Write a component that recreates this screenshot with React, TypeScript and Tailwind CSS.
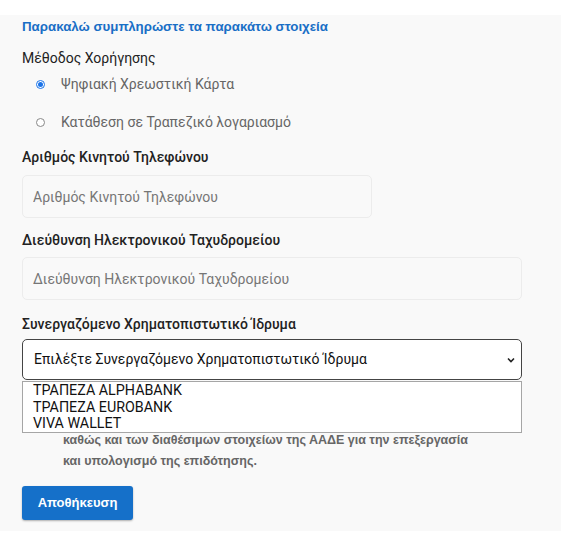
export default function App() {
  return (
    <div className="bg-white pt-[15px] pb-[10px] font-['Roboto',sans-serif]">
      <div className="bg-[#f9f9f9] px-[22px] pt-[3px] pb-[11px]">
        <h3 className="font-['Liberation_Sans',Arial,sans-serif] text-[13.3px] leading-[18px] font-bold text-[#1a6fc6]">
          Παρακαλώ συμπληρώστε τα παρακάτω στοιχεία
        </h3>

        <div className="mt-[13px] text-[14px] leading-[18px] text-[#222]">Μέθοδος Χορήγησης</div>
        <div className="mt-[8px] flex flex-col gap-[20px] pl-[14px]">
          <Radio checked label="Ψηφιακή Χρεωστική Κάρτα" />
          <Radio label="Κατάθεση σε Τραπεζικό λογαριασμό" />
        </div>

        <Label className="mt-[17px]">Αριθμός Κινητού Τηλεφώνου</Label>
        <input
          placeholder="Αριθμός Κινητού Τηλεφώνου"
          className="mt-[9px] block h-[43px] w-[350px] rounded-[5px] border border-[#ececec] bg-[#f9f9f9] px-[10px] text-[14px] text-[#333] outline-none placeholder:text-[#767676]"
        />

        <Label className="mt-[13px]">Διεύθυνση Ηλεκτρονικού Ταχυδρομείου</Label>
        <input
          placeholder="Διεύθυνση Ηλεκτρονικού Ταχυδρομείου"
          className="mt-[8px] block h-[43px] w-[500px] rounded-[5px] border border-[#ececec] bg-[#f9f9f9] px-[10px] text-[14px] text-[#333] outline-none placeholder:text-[#767676]"
        />

        <Label className="mt-[15px]">Συνεργαζόμενο Χρηματοπιστωτικό Ίδρυμα</Label>
        <div className="relative mt-[6px] w-[500px]">
          <div className="flex h-[41px] items-center justify-between rounded-[5px] border border-[#444] bg-white pr-[6px] pl-[11px] text-[14px] text-[#111]">
            <span>Επιλέξτε Συνεργαζόμενο Χρηματοπιστωτικό Ίδρυμα</span>
            <svg width="8" height="6" viewBox="0 0 8 6" className="mt-[1px]">
              <path d="M1 1.5 L4 4.5 L7 1.5" fill="none" stroke="#222" strokeWidth="1.6" />
            </svg>
          </div>
          <ul className="absolute top-[42px] left-0 z-10 w-[500px] border border-[#a6a6a6] bg-white text-[14.3px] leading-[16.5px] text-[#111]">
            <li className="pl-[10px]">ΤΡΑΠΕΖΑ ALPHABANK</li>
            <li className="pl-[10px]">ΤΡΑΠΕΖΑ EUROBANK</li>
            <li className="pl-[10px]">VIVA WALLET</li>
          </ul>
          <div className="flex gap-[10px] pt-[8px] pl-[17px]">
            <input type="checkbox" className="mt-[4px] h-[13px] w-[13px]" />
            <p className="pl-[1px] font-['Liberation_Sans',Arial,sans-serif] text-[12.5px] leading-[21px] font-bold text-[#666]">
              Συναινώ στη χρήση των στοιχείων επικοινωνίας που δηλώνω παραπάνω
              <br />
              και της διεύθυνσης κατοικίας μου από το Μητρώο του Υπουργείου
              <br />
              καθώς και των διαθέσιμων στοιχείων της ΑΑΔΕ για την επεξεργασία
              <br />
              και υπολογισμό της επιδότησης.
            </p>
          </div>
        </div>

        <button
          type="button"
          className="mt-[14px] h-[34px] w-[111px] rounded-[3px] bg-[#1570c9] font-['Liberation_Sans',Arial,sans-serif] text-[13px] font-bold text-white shadow-[0_1px_2px_rgba(0,0,0,0.3)]"
        >
          Αποθήκευση
        </button>
      </div>
    </div>
  );
}

function Label({ children, className = "" }: { children: React.ReactNode; className?: string }) {
  return <div className={`text-[14px] leading-[18px] font-medium text-[#222] ${className}`}>{children}</div>;
}

function Radio({ checked = false, label }: { checked?: boolean; label: string }) {
  return (
    <label className="flex items-center gap-[16px] text-[14px] leading-[18px] text-[#666]">
      <span
        className={`flex h-[9px] w-[9px] items-center justify-center rounded-full border ${checked ? "border-[#1a73e8] bg-white" : "border-[#888] bg-white"}`}
      >
        {checked && <span className="h-[5px] w-[5px] rounded-full bg-[#1a73e8]" />}
      </span>
      {label}
    </label>
  );
}
